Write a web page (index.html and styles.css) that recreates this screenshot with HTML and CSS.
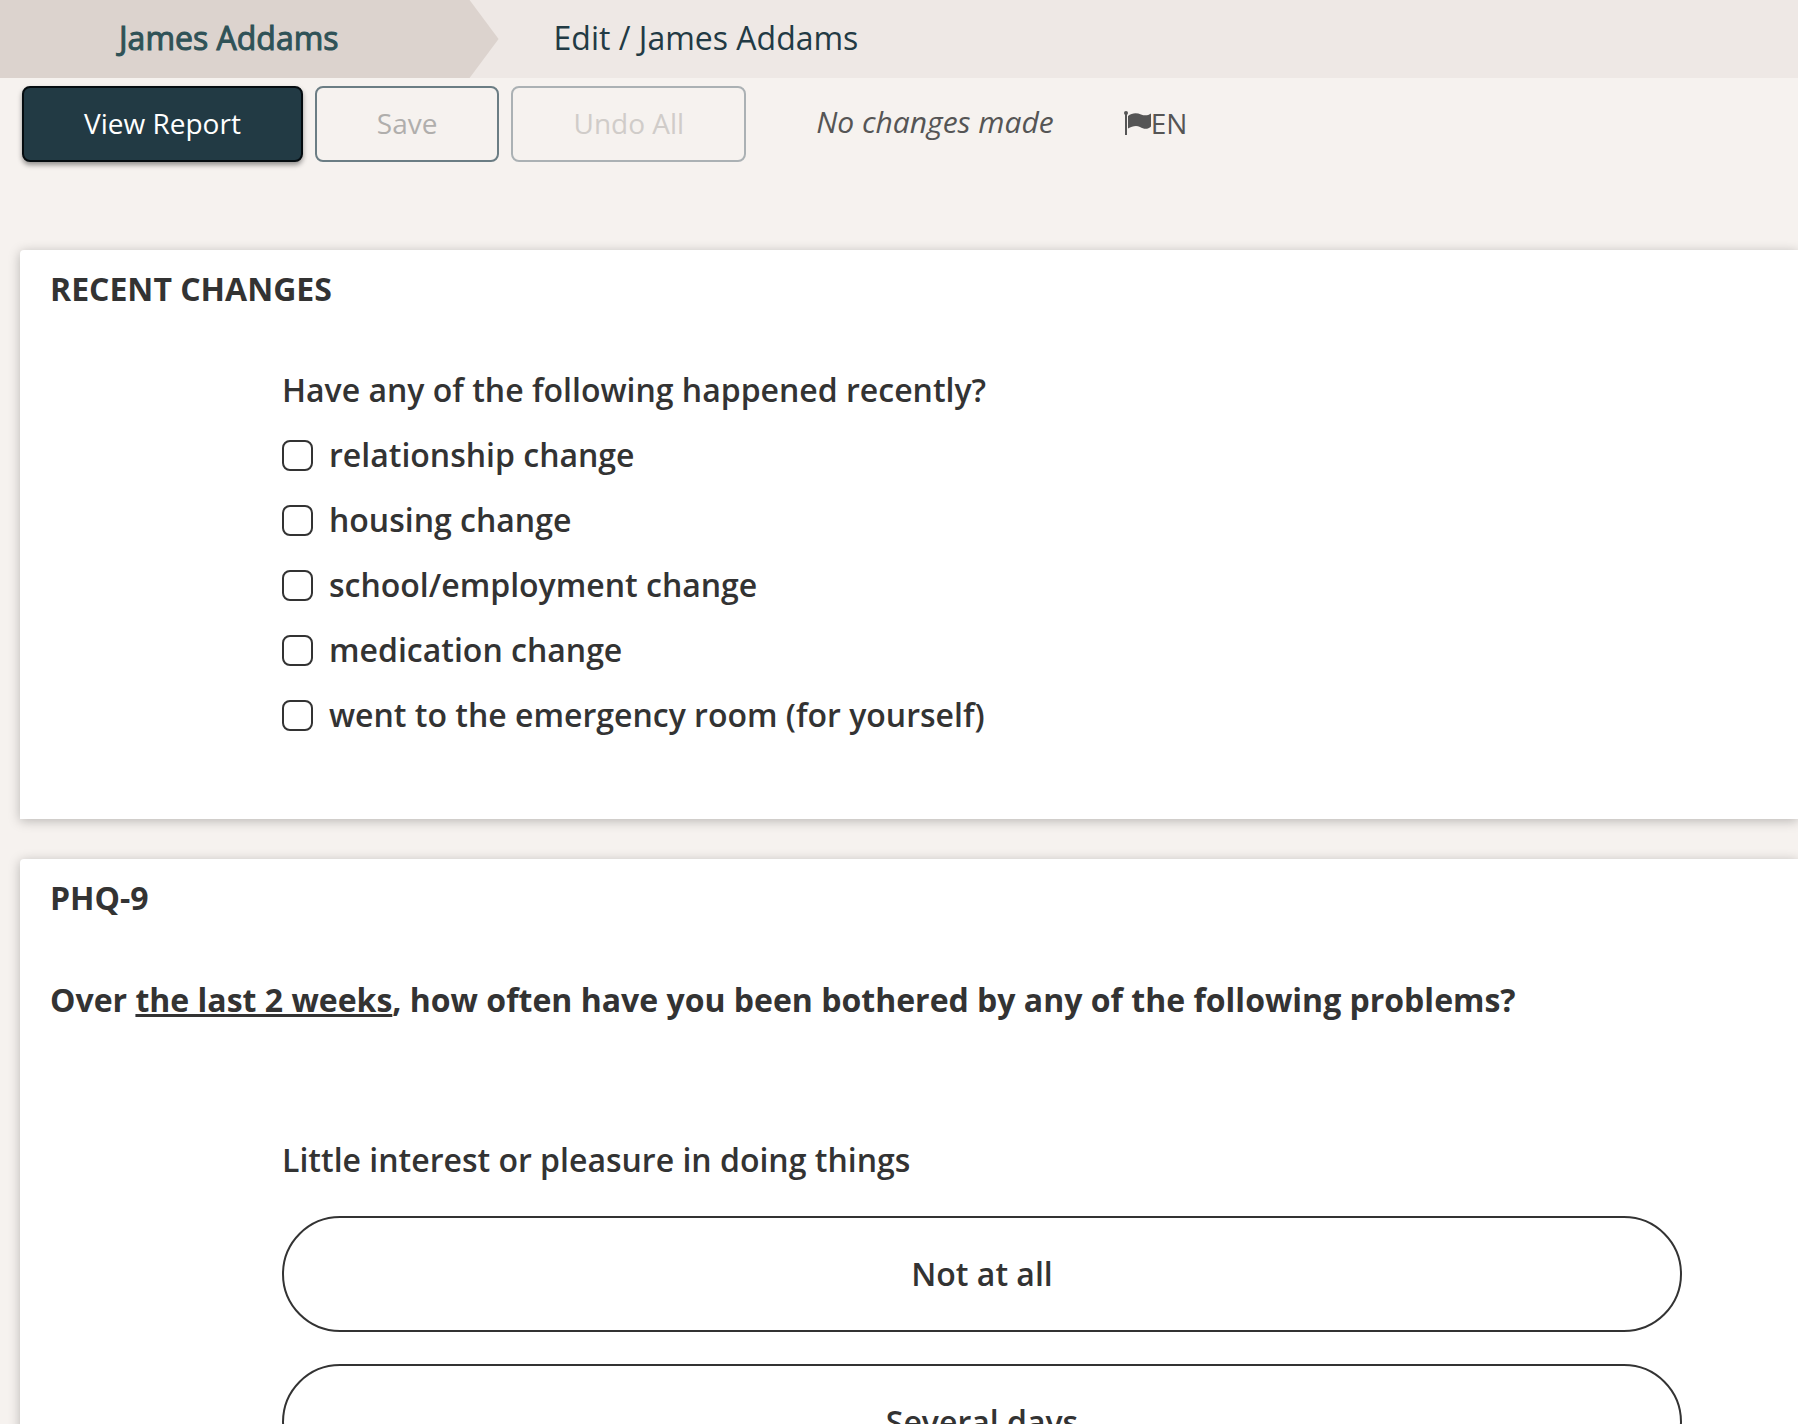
FILE: index.html
```html
<!doctype html>
<html lang="en">
<head>
  <meta charset="UTF-8">
  <title>Edit / James Addams</title>
  <meta name="viewport" content="width=device-width, initial-scale=1.0">
  <link rel="stylesheet" href="styles.css">
</head>
<body>

  <nav class="breadcrumbs">
    <a class="crumb crumb-patient" href="#">James Addams</a>
    <a class="crumb crumb-current" href="#">Edit / James Addams</a>
  </nav>

  <div class="toolbar">
    <button type="button" class="btn btn-primary">View Report</button>
    <button type="button" class="btn btn-save" disabled>Save</button>
    <button type="button" class="btn btn-undo" disabled>Undo All</button>
    <span class="status">No changes made</span>
    <button type="button" class="lang">
      <svg class="flag" viewBox="0 0 27 24" aria-hidden="true">
        <circle cx="2" cy="2" r="2"/>
        <path d="M1 2h2v22H1z"/>
        <path d="M4 5C8 1.500 13 1.500 17 3.500C21 5 24 4.500 27 2.500V15.500C24 18.500 20 18.500 16 16C12 14 8 15.500 4 17.500Z"/>
      </svg>EN
    </button>
  </div>

  <main>
    <section class="panel">
      <h2>RECENT CHANGES</h2>
      <fieldset class="question">
        <legend>Have any of the following happened recently?</legend>
        <label class="check"><input type="checkbox" name="recent" value="relationship">relationship change</label>
        <label class="check"><input type="checkbox" name="recent" value="housing">housing change</label>
        <label class="check"><input type="checkbox" name="recent" value="school">school/employment change</label>
        <label class="check"><input type="checkbox" name="recent" value="medication">medication change</label>
        <label class="check"><input type="checkbox" name="recent" value="er">went to the emergency room (for yourself)</label>
      </fieldset>
    </section>

    <section class="panel">
      <h2>PHQ-9</h2>
      <p class="intro">Over <u>the last 2 weeks</u>, how often have you been bothered by any of the following problems?</p>
      <fieldset class="question">
        <legend>Little interest or pleasure in doing things</legend>
        <div class="choices">
          <button type="button" class="choice">Not at all</button>
          <button type="button" class="choice">Several days</button>
        </div>
      </fieldset>
    </section>
  </main>

</body>
</html>
```
FILE: styles.css
```css
* {
  box-sizing: border-box;
}
body {
  font-family: "Open Sans", "Noto Sans", sans-serif;
  font-size: 32px;
  line-height: 44px;
  margin: 0;
  background: #f6f2ef;
  color: #333;
}
button {
  font: inherit;
  color: inherit;
}

/* breadcrumbs */
.breadcrumbs {
  display: flex;
  height: 78px;
  background: #eee8e5;
}
.crumb {
  display: flex;
  align-items: center;
  padding-bottom: 2px;
  color: #223a44;
  text-decoration: none;
}
.crumb-patient {
  padding-left: 119px;
  padding-right: 160px;
  background: #dcd3ce;
  color: #2f5257;
  -webkit-text-stroke: 1px #2f5257;
  clip-path: polygon(0 0, calc(100% - 29px) 0, 100% 50%, calc(100% - 29px) 100%, 0 100%);
}
.crumb-current {
  padding-left: 55px;
}

/* toolbar */
.toolbar {
  display: flex;
  align-items: center;
  gap: 12px;
  padding: 8px 22px;
  font-size: 28px;
}
.btn {
  height: 76px;
  padding: 0 60px 2px;
  border: 2px solid #6b7d84;
  border-radius: 8px;
  background: transparent;
}
.btn-primary {
  background: #223a44;
  border-color: #050c10;
  color: #fff;
  box-shadow: 0 3px 5px rgba(0, 0, 0, 0.4);
}
.btn-save {
  color: #b0aeac;
}
.btn-undo {
  border-color: #abb1b4;
  color: #d0ccc9;
}
.status {
  margin-left: 58px;
  padding-bottom: 4px;
  font-size: 30px;
  font-style: italic;
  color: #555;
}
.lang {
  display: flex;
  align-items: center;
  margin-left: 58px;
  padding: 0 0 2px;
  border: 0;
  background: none;
  color: #555;
}
.flag {
  width: 27px;
  height: 24px;
  fill: currentColor;
}

/* panels */
main {
  padding: 80px 0 0 20px;
}
.panel {
  margin-bottom: 40px;
  padding: 17px 0 82px;
  background: #fff;
  border-radius: 4px 0 0 0;
  box-shadow: 0 2px 12px rgba(0, 0, 0, 0.25);
}
.panel h2,
.intro {
  margin: 0 30px;
  font-size: 32px;
  font-weight: 700;
}
.panel .intro {
  margin-top: 58px;
  margin-bottom: 116px;
}
.question {
  margin: 0 116px 0 262px;
  padding: 0;
  border: 0;
  font-weight: 600;
}
.question legend {
  padding: 0;
}
h2 + .question {
  margin-top: 57px;
}
.check {
  display: flex;
  align-items: center;
  width: fit-content;
  margin-top: 21px;
}
.check input {
  appearance: none;
  width: 31px;
  height: 31px;
  margin: 0 16px 0 0;
  border: 2px solid #333;
  border-radius: 8px;
  background: #fff;
}
.check input:checked {
  background: #333;
}
.choices {
  display: flex;
  flex-direction: column;
  gap: 32px;
  margin-top: 34px;
}
.choice {
  height: 116px;
  border: 2px solid #333;
  border-radius: 58px;
  background: #fff;
}
```
